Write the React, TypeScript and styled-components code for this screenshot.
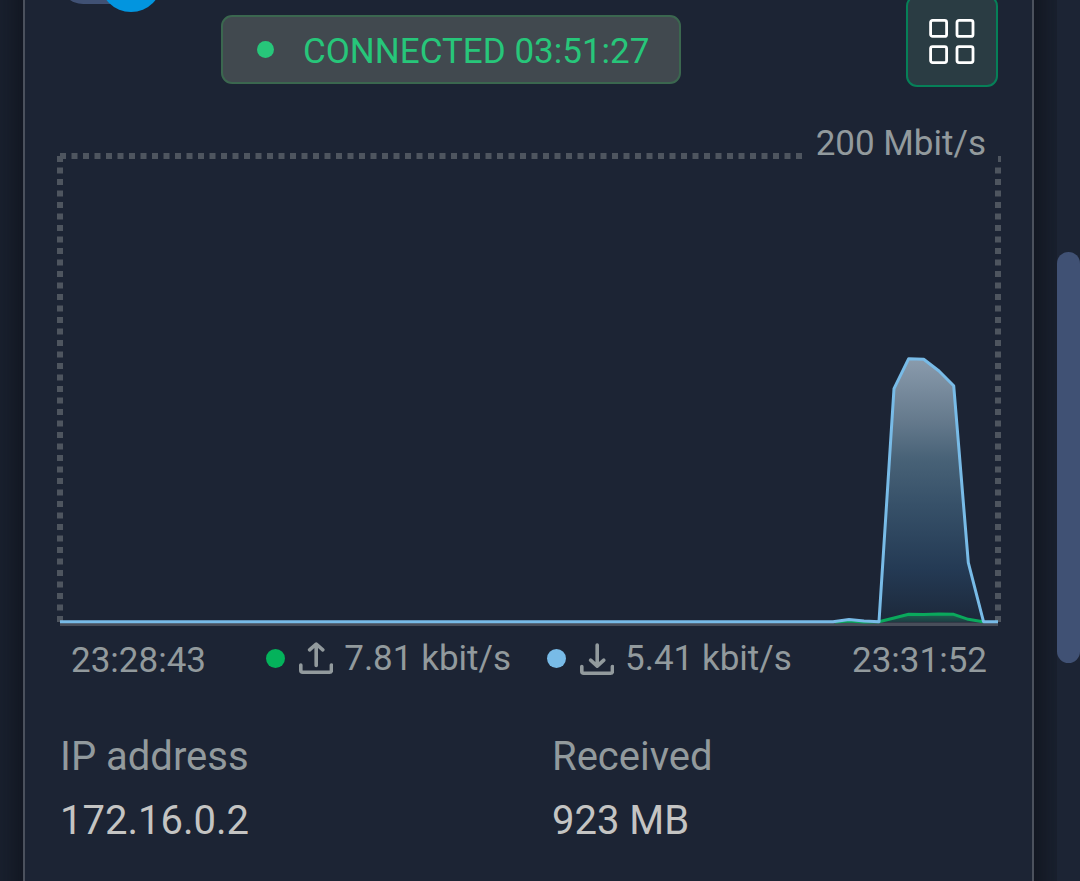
import React from "react";
import styled, { createGlobalStyle } from "styled-components";

const color = {
  page: "#1b2332",
  panel: "#1c2434",
  frame: "#4b515d",
  muted: "#929a9d",
  value: "#c4c4c3",
  green: "#04b25b",
  online: "#27c67a",
  blue: "#78bbe7",
  accent: "#0295df",
  slate: "#405174",
};

const GlobalStyle = createGlobalStyle`
  *, *::before, *::after { box-sizing: border-box; }
  body {
    margin: 0;
    background: ${color.page};
    font-family: Roboto, "Liberation Sans", sans-serif;
  }
`;

const Page = styled.div`
  display: flex;
  min-height: 100vh;
  background: ${color.page};
`;

const Main = styled.main`
  display: flex;
  flex: 1;
  min-width: 0;
  padding: 0 23px;
  overflow: hidden;
`;

const Panel = styled.section`
  flex: 1;
  min-width: 0;
  margin: -50px 0;
  padding: 0 34px 74px 35px;
  background: ${color.panel};
  border: solid ${color.frame};
  border-width: 0 2px;
  box-shadow: 0 0 36px 4px #0d1018;
`;

const ScrollTrack = styled.div`
  flex: none;
  width: 23px;
  padding-top: 252px;
  background: ${color.panel};
`;

const ScrollThumb = styled.div`
  height: 411px;
  border-radius: 12px;
  background: ${color.slate};
`;

const Header = styled.header`
  display: grid;
  grid-template-columns: 161px auto 1fr;
  height: 137px;
`;

const Switch = styled.input`
  appearance: none;
  align-self: start;
  display: flex;
  align-items: center;
  justify-content: flex-end;
  width: 102px;
  height: 46px;
  margin: 8px 0 0;
  cursor: pointer;
  background: ${color.slate};
  border-radius: 23px;

  &::before {
    content: "";
    flex: none;
    width: 62px;
    height: 62px;
    border-radius: 50%;
    background: ${color.accent};
  }
`;

const Status = styled.div`
  align-self: end;
  display: flex;
  align-items: center;
  gap: 29px;
  height: 69px;
  margin-bottom: 3px;
  padding: 0 30px 0 34px;
  border: 2px solid #3b674f;
  border-radius: 11px;
  background: #41494f;
  color: ${color.online};
  font-size: 35px;
  line-height: 41px;
  white-space: nowrap;
`;

const StatusText = styled.span`
  padding-top: 3px;
`;

const Dot = styled.span<{ $size: number; $color: string }>`
  flex: none;
  width: ${(p) => p.$size}px;
  height: ${(p) => p.$size}px;
  border-radius: 50%;
  background: ${(p) => p.$color};
`;

const IconButton = styled.button`
  align-self: end;
  justify-self: end;
  display: flex;
  align-items: center;
  justify-content: center;
  width: 92px;
  height: 92px;
  padding: 0;
  border: 2px solid #068058;
  border-radius: 11px;
  background: #2a3c43;
  color: #fff;
  cursor: pointer;
`;

const Chart = styled.figure`
  position: relative;
  margin: 69px 0 0;
  height: 470px;
`;

const Plot = styled.svg`
  display: block;
  width: 100%;
  height: 470px;
  overflow: visible;
`;

const ScaleLabel = styled.figcaption`
  position: absolute;
  top: -33px;
  right: 0;
  padding: 0 12px 0 13px;
  background: ${color.panel};
  color: ${color.muted};
  font-size: 35px;
  line-height: 41px;
`;

const AxisRow = styled.div`
  display: flex;
  align-items: center;
  justify-content: space-between;
  height: 68px;
  padding: 0 11px;
  color: ${color.muted};
  font-size: 35px;
  line-height: 41px;
  white-space: nowrap;
`;

const Legend = styled.div`
  display: flex;
  gap: 36px;
  padding-bottom: 3px;
`;

const LegendItem = styled.div`
  display: flex;
  align-items: center;
`;

const TrayIcon = styled.svg`
  flex: none;
  width: 34px;
  height: 34px;
  margin: 0 11px 0 14px;
  fill: none;
  stroke: currentColor;
  stroke-width: 3.6;
  stroke-linecap: round;
  stroke-linejoin: round;
`;

const Stats = styled.dl`
  display: grid;
  grid-template-columns: 1fr 1fr;
  column-gap: 46px;
  margin: 31px 0 0;
  font-size: 40px;
  line-height: 64px;
`;

const StatName = styled.dt`
  color: ${color.muted};
`;

const StatValue = styled.dd`
  margin: 0;
  color: ${color.value};
`;

const stats = [
  { name: "IP address", value: "172.16.0.2" },
  { name: "Received", value: "923 MB" },
];

const download =
  "0,465.7 773,465.7 789,463.5 804,465 819,465.7 834,232.7 848.7,202.7 863.7,203.3 879,215 893.7,229.7 908.3,406.7 923.5,465.7 938,465.7";
const upload =
  "775,466 789,465 804,466 819,465.7 834,462 848.7,458.3 863.7,458.6 879,458 893.7,458.3 908.3,463.3 923,465.7";

function TrafficChart() {
  return (
    <Chart>
      <Plot viewBox="0 0 938 470" preserveAspectRatio="none" aria-label="Traffic over time" role="img">
        <defs>
          <linearGradient id="down" x1="0" y1="203" x2="0" y2="466" gradientUnits="userSpaceOnUse">
            <stop offset="0" stopColor="#8a9bac" />
            <stop offset="0.24" stopColor="#64798c" />
            <stop offset="0.38" stopColor="#486277" />
            <stop offset="0.55" stopColor="#375169" />
            <stop offset="0.8" stopColor="#243a54" />
            <stop offset="1" stopColor="#1c283a" />
          </linearGradient>
          <linearGradient id="up" x1="0" y1="458" x2="0" y2="468" gradientUnits="userSpaceOnUse">
            <stop offset="0" stopColor="#1d6350" />
            <stop offset="1" stopColor="#1d3440" />
          </linearGradient>
        </defs>
        <g stroke="#4e555f" strokeWidth="6" strokeDasharray="6 5.5">
          <path d="M0 0H743" />
          <path d="M0 0V466" />
          <path d="M938 0V466" />
        </g>
        <path d="M0 468.2H938" stroke="#484e5a" strokeWidth="3.4" />
        <polygon points={download} fill="url(#down)" />
        <polygon points={upload} fill="url(#up)" />
        <polyline points={upload} fill="none" stroke="#0aa95c" strokeWidth="3" strokeLinejoin="round" />
        <polyline points={download} fill="none" stroke={color.blue} strokeWidth="3" strokeLinejoin="round" />
      </Plot>
      <ScaleLabel>200 Mbit/s</ScaleLabel>
    </Chart>
  );
}

export default function App() {
  return (
    <>
      <GlobalStyle />
      <Page>
        <Main>
          <Panel>
            <Header>
              <Switch type="checkbox" role="switch" defaultChecked aria-label="Connection enabled" />
              <Status>
                <Dot $size={17} $color={color.online} />
                <StatusText>CONNECTED 03:51:27</StatusText>
              </Status>
              <IconButton type="button" aria-label="Show menu">
                <svg width="46" height="46" viewBox="0 0 46 46" fill="none" stroke="currentColor" strokeWidth="2.8">
                  <rect x="1.6" y="2.4" width="16" height="16" rx="2" />
                  <rect x="28" y="2.4" width="16" height="16" rx="2" />
                  <rect x="1.6" y="28.6" width="16" height="16" rx="2" />
                  <rect x="28" y="28.6" width="16" height="16" rx="2" />
                </svg>
              </IconButton>
            </Header>

            <TrafficChart />

            <AxisRow>
              <time>23:28:43</time>
              <Legend>
                <LegendItem>
                  <Dot $size={19} $color={color.green} />
                  <TrayIcon viewBox="0 0 34 34" aria-hidden="true">
                    <path d="M1.8 23V28.2Q1.8 30.2 3.8 30.2H30.4Q32.4 30.2 32.4 28.2V23" />
                    <path d="M17.2 23.5V2.2M10.6 7.8L17.2 2L23.8 7.8" />
                  </TrayIcon>
                  7.81 kbit/s
                </LegendItem>
                <LegendItem>
                  <Dot $size={19} $color={color.blue} />
                  <TrayIcon viewBox="0 0 34 34" aria-hidden="true">
                    <path d="M1.8 24.5V29.2Q1.8 31.2 3.8 31.2H30.4Q32.4 31.2 32.4 29.2V24.5" />
                    <path d="M17.2 3V24M10.6 18.2L17.2 24.2L23.8 18.2" />
                  </TrayIcon>
                  5.41 kbit/s
                </LegendItem>
              </Legend>
              <time>23:31:52</time>
            </AxisRow>

            <Stats>
              {stats.map((s) => (
                <div key={s.name}>
                  <StatName>{s.name}</StatName>
                  <StatValue>{s.value}</StatValue>
                </div>
              ))}
            </Stats>
          </Panel>
        </Main>
        <ScrollTrack>
          <ScrollThumb />
        </ScrollTrack>
      </Page>
    </>
  );
}
